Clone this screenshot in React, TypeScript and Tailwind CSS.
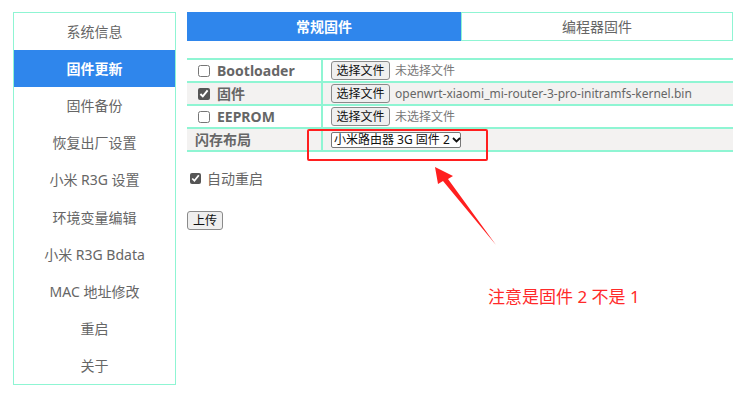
import React from "react";

const items = [
  "系统信息",
  "固件更新",
  "固件备份",
  "恢复出厂设置",
  "小米 R3G 设置",
  "环境变量编辑",
  "小米 R3G Bdata",
  "MAC 地址修改",
  "重启",
  "关于",
];

const font = { fontFamily: '"Noto Sans", "Noto Sans CJK SC", sans-serif' };

function FileBtn() {
  return (
    <button className="h-[19px] w-[59px] shrink-0 rounded-[3px] border border-[#8a8a8a] bg-[#efefef] text-[12px] leading-[17px] text-[#111]">
      选择文件
    </button>
  );
}

function Row({
  gray,
  label,
  children,
}: {
  gray?: boolean;
  label: React.ReactNode;
  children: React.ReactNode;
}) {
  return (
    <div
      className={`flex h-[23px] border-b-2 border-[#8ff5d3] ${gray ? "bg-[#f3f2f1]" : "bg-white"}`}
    >
      <div className="flex w-[136px] items-center border-r-2 border-[#8ff5d3] pl-[11px]">{label}</div>
      <div className="flex flex-1 items-center pl-[8px]">{children}</div>
    </div>
  );
}

export default function App() {
  return (
    <div className="relative flex h-[405px] w-[750px] bg-white pl-[13px] pt-[12px]" style={font}>
      <div className="flex h-[373px] w-[163px] flex-col border border-[#8ff5d3] py-0">
        {items.map((t, i) => (
          <div
            key={t}
            className={`flex h-[37.1px] items-center justify-center text-[14px] ${
              i === 1 ? "bg-[#2f86ec] font-bold text-white" : "text-[#666]"
            }`}
          >
            {t}
          </div>
        ))}
      </div>
      <div className="ml-[11px] flex w-[546px] flex-col">
        <div className="flex h-[29px]">
          <div className="flex w-[274px] items-center justify-center bg-[#2f86ec] text-[14px] font-bold text-white">
            常规固件
          </div>
          <div className="flex flex-1 items-center justify-center border border-[#8ff5d3] text-[14px] text-[#666]">
            编程器固件
          </div>
        </div>
        <div className="mt-[17px] border-t-2 border-[#8ff5d3]">
          <Row
            label={
              <span className="flex items-center gap-[7px] text-[14px] font-bold text-[#666]">
                <input type="checkbox" className="m-0 h-[12px] w-[12px] accent-[#555]" />
                Bootloader
              </span>
            }
          >
            <FileBtn />
            <span className="ml-[5px] text-[12px] text-[#777]">未选择文件</span>
          </Row>
          <Row
            gray
            label={
              <span className="flex items-center gap-[7px] text-[14px] font-bold text-[#666]">
                <input type="checkbox" defaultChecked className="m-0 h-[12px] w-[12px] accent-[#555]" />
                固件
              </span>
            }
          >
            <FileBtn />
            <span className="ml-[5px] text-[12px] text-[#666]">openwrt-xiaomi_mi-router-3-pro-initramfs-kernel.bin</span>
          </Row>
          <Row
            label={
              <span className="flex items-center gap-[7px] text-[14px] font-bold text-[#666]">
                <input type="checkbox" className="m-0 h-[12px] w-[12px] accent-[#555]" />
                EEPROM
              </span>
            }
          >
            <FileBtn />
            <span className="ml-[5px] text-[12px] text-[#777]">未选择文件</span>
          </Row>
          <Row
            gray
            label={<span className="-ml-[3px] text-[14px] font-bold text-[#666]">闪存布局</span>}
          >
            <div className="flex h-[16px] w-[130px] items-center justify-between gap-[2px] rounded-[2px] border border-[#777] bg-white pl-[2px] pr-[3px]">
              <span className="whitespace-nowrap text-[12px] leading-[14px] text-[#111]">小米路由器 3G 固件 2</span>
              <svg className="shrink-0" width="9" height="6" viewBox="0 0 9 6">
                <path d="M1 1 L4.5 4.5 L8 1" fill="none" stroke="#111" strokeWidth="1.8" />
              </svg>
            </div>
          </Row>
        </div>
        <label className="mt-[16px] flex items-center gap-[6px] pl-[3px] text-[14px] text-[#666]">
          <input type="checkbox" defaultChecked className="m-0 h-[11px] w-[11px] accent-[#555]" />
          自动重启
        </label>
        <div className="mt-[18px]">
          <button className="h-[19px] w-[36px] rounded-[3px] border border-[#8a8a8a] bg-[#efefef] text-[12px] leading-[17px] text-[#111]">
            上传
          </button>
        </div>
      </div>

      <div className="absolute left-[307px] top-[129px] h-[32px] w-[181px] rounded-[2px] border-2 border-[#ff1f1f]" />
      <svg className="absolute left-0 top-0" width="750" height="405" viewBox="0 0 750 405">
        <polygon points="435,167 453,176 448,179 496,245 443,181 438,184" fill="#ff1f1f" />
      </svg>
      <div className="absolute left-[488px] top-[285px] text-[17px] leading-[24px] text-[#ff2a2a]">
        注意是固件 2 不是 1
      </div>
    </div>
  );
}
